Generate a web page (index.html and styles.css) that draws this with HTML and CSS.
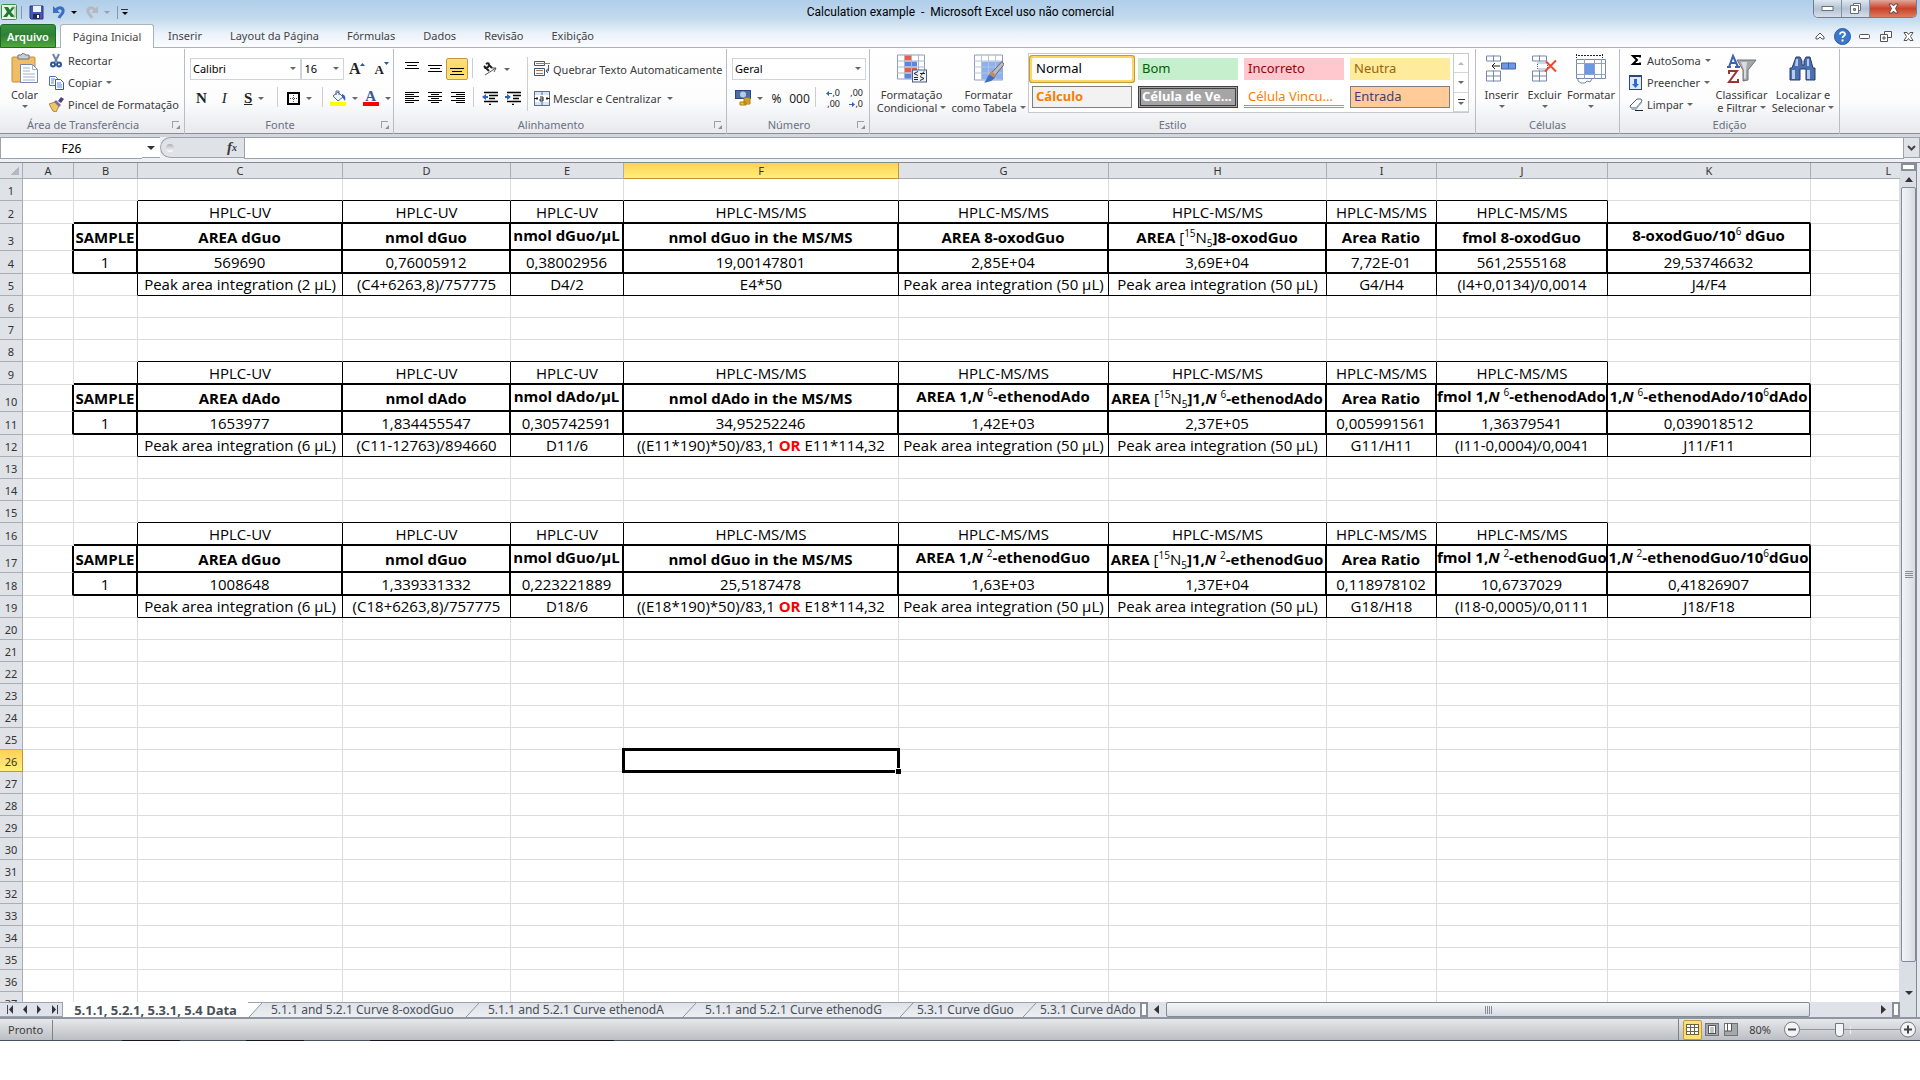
FILE: index.html
```html
<!DOCTYPE html>
<html lang="pt-BR">
  <head>
    <meta charset="UTF-8" />
    <title>Calculation example - Microsoft Excel uso não comercial</title>
    <link rel="stylesheet" href="styles.css">
  </head>
  <body>
    <div class="window">
      <header class="top">
        <div class="title-bar">
          <div class="quick-access">
            <svg width="17" height="17" viewBox="0 0 17 17"><rect x=".5" y=".5" width="15" height="15" rx="1" fill="#e9f4e4" stroke="#3f8f4a"/><path d="M3 3h4l2 3 2-3h3L10 8l4 5h-4l-2-3-2 3H2l4-5z" fill="#1d7a33"/><path d="M11 3h3v10h-2" fill="none" stroke="#8cc08c"/></svg>
            <i class="bar"></i>
            <button class="qa" title="Salvar"><svg width="15" height="15" viewBox="0 0 15 15"><path d="M1 1h13v13H2l-1-1z" fill="#4a55b8" stroke="#2c3484"/><path d="M4 1h8v6H4z" fill="#eef3fb"/><path d="M4 9h7v5H4z" fill="#23285c"/><path d="M8 10h2v3H8z" fill="#fff"/></svg></button>
            <button class="qa undo" title="Desfazer"><svg width="14" height="14" viewBox="0 0 14 14"><path d="M4 5c3-4 8-2 7 2-1 3-3 3-4 6" fill="none" stroke="#3d6fc0" stroke-width="3"/><path d="M1 1v7h7z" fill="#3d6fc0"/></svg><i class="arr dark"></i></button>
            <button class="qa undo" title="Refazer"><svg width="14" height="14" viewBox="0 0 14 14"><path d="M10 5C7 1 2 3 3 7c1 3 3 3 4 6" fill="none" stroke="#b4b9c0" stroke-width="3"/><path d="M13 1v7H6z" fill="#b4b9c0"/></svg><i class="arr pale"></i></button>
            <i class="bar"></i>
            <button class="qa more" title="Personalizar"><i class="dash"></i><i class="arr dark"></i></button>
          </div>
          <h1>Calculation example&nbsp; -&nbsp; Microsoft Excel uso não comercial</h1>
          <div class="window-side">
            <div class="window-buttons">
              <button title="Minimizar"><svg width="13" height="7" viewBox="0 0 13 7"><rect x="1" y="1.500" width="11" height="4" fill="#fff" stroke="#666f7a"/></svg></button>
              <button title="Restaurar"><svg width="13" height="13" viewBox="0 0 13 13"><path d="M4.500 1.500h7v7h-2v-5h-5z" fill="#fff" stroke="#666f7a"/><path d="M1.500 3.500h8v8h-8z" fill="#fff" stroke="#666f7a"/><path d="M4.500 6.500h2v2h-2z" fill="#bbb" stroke="#666f7a"/></svg></button>
              <button class="close" title="Fechar"><svg width="13" height="11" viewBox="0 0 13 11"><path d="M2 1h3l1.500 2L8 1h3L8.500 5.500 11 10H8L6.500 8 5 10H2l2.500-4.500z" fill="#fff" stroke="#6b4044"/></svg></button>
            </div>
          </div>
        </div>
        <nav class="tabs">
          <button class="file">Arquivo</button>
          <button class="active">Página Inicial</button>
          <button>Inserir</button>
          <button>Layout da Página</button>
          <button>Fórmulas</button>
          <button>Dados</button>
          <button>Revisão</button>
          <button>Exibição</button>
          <div class="tab-tools">
            <button title="Minimizar faixa"><svg width="10" height="8" viewBox="0 0 10 8"><path d="M1 5l4-4 4 4v2H7L5 5 3 7H1z" fill="#fff" stroke="#555"/></svg></button>
            <button title="Ajuda"><svg width="17" height="17" viewBox="0 0 17 17"><circle cx="8.500" cy="8.500" r="8" fill="#3b78cc" stroke="#2a5ca8"/><path d="M6 6.500c0-3.500 5.500-3 5 0-.3 1.500-2.500 1.500-2.500 3.500" fill="none" stroke="#fff" stroke-width="1.800"/><rect x="7.500" y="11.500" width="2" height="2" fill="#fff"/></svg></button>
            <button title="Minimizar"><svg width="11" height="5" viewBox="0 0 11 5"><rect x=".5" y=".5" width="10" height="4" rx="1" fill="#fff" stroke="#555"/></svg></button>
            <button title="Restaurar"><svg width="12" height="11" viewBox="0 0 12 11"><path d="M4.500.5h7v6h-7z" fill="#fff" stroke="#555"/><path d="M.5 3.500h7v7h-7z" fill="#fff" stroke="#555"/><path d="M3 6h2v2H3z" fill="#fff" stroke="#555"/></svg></button>
            <button title="Fechar"><svg width="11" height="9" viewBox="0 0 11 9"><path d="M1 .5h3l1.500 2 1.500-2h3L7.500 4.500 10 8.500H7l-1.500-2-1.500 2H1l2.500-4z" fill="#fff" stroke="#555"/></svg></button>
          </div>
        </nav>
      </header>

      <section class="ribbon">
        <div class="group clipboard">
          <div class="tools">
            <button class="big"><svg width="28" height="32" viewBox="0 0 28 32"><rect x="1" y="4" width="23" height="25" rx="1" fill="#efbd67" stroke="#c78e3a"/><path d="M7 2h3l2-2 3 2h3v4H7z" fill="#c9ced6" stroke="#70757d"/><path d="M9.500 11.500h12l5 5v13h-17z" fill="#fff" stroke="#6f87b5"/><path d="M21.500 11.500v5h5M12 15h7M12 18h7M12 21h12M12 24h12M12 27h12" fill="none" stroke="#9db0d1"/></svg><span>Colar</span><i class="arr"></i></button>
            <div class="list">
              <button><svg width="15" height="15" viewBox="0 0 15 15"><path d="M4 1l4 8M10 1L6 9" stroke="#6d83a8" stroke-width="2"/><circle cx="4" cy="11.500" r="2" fill="none" stroke="#2f5597" stroke-width="2"/><circle cx="10" cy="11.500" r="2" fill="none" stroke="#2f5597" stroke-width="2"/></svg>Recortar</button>
              <button><svg width="15" height="15" viewBox="0 0 15 15"><path d="M.5 1.500h6l2 2v7h-8z" fill="#fff" stroke="#4d74b5"/><path d="M6.500 4.500h5l3 3v7h-8z" fill="#fff" stroke="#2d5cae"/><path d="M2 4h4M2 6h3M2 8h3M8 8h4M8 10h5M8 12h5" stroke="#5d86cc"/></svg>Copiar<i class="arr"></i></button>
              <button><svg width="15" height="15" viewBox="0 0 15 15"><path d="M0 7l6-2 4 4-3 6-3-1z" fill="#eec665" stroke="#b08a3a"/><path d="M5 5l2-2 5 5-2 2z" fill="#7a6ea8"/><path d="M9 4l3-4 3 2-3 4z" fill="#4b4570"/></svg>Pincel de Formatação</button>
            </div>
          </div>
          <footer class="has-launch">Área de Transferência<i class="launch"></i></footer>
        </div>

        <div class="group font">
          <div class="tools rows">
            <div class="row">
              <span class="select w-font"><select aria-label="Fonte"><option>Calibri</option></select></span><span class="select w-size"><select aria-label="Tamanho"><option>16</option></select></span>
              <button class="ico serif a-big">A<svg width="5" height="3" viewBox="0 0 5 3"><path d="M0 3l2.500-3L5 3z" fill="#2f5597"/></svg></button>
              <button class="ico serif a-small">A<svg width="5" height="3" viewBox="0 0 5 3"><path d="M0 0h5L2.500 3z" fill="#2f5597"/></svg></button>
            </div>
            <div class="row">
              <button class="ico serif"><b>N</b></button>
              <button class="ico serif"><em>I</em></button>
              <button class="ico serif split"><u>S</u><i class="arr"></i></button>
              <i class="sep"></i>
              <button class="ico split"><svg width="13" height="13" viewBox="0 0 13 13"><rect x="1" y="1" width="11" height="11" fill="none" stroke="#000" stroke-width="2"/><path d="M6.500 3v8M3 6.500h8" stroke="#555" stroke-dasharray="1 1"/></svg><i class="arr"></i></button>
              <i class="sep"></i>
              <button class="ico split"><svg width="16" height="16" viewBox="0 0 16 16"><path d="M3 6l5-4 5 5-5 4z" fill="#eef3fa" stroke="#50698f"/><path d="M6 5V1h3v4" fill="none" stroke="#50698f"/><path d="M12 4c3 1 4 3 3 7l-3-4z" fill="#3d67ad"/><rect y="12" width="16" height="4" fill="#ff0"/></svg><i class="arr"></i></button>
              <button class="ico split"><span class="font-color">A</span><i class="arr"></i></button>
            </div>
          </div>
          <footer class="has-launch">Fonte<i class="launch"></i></footer>
        </div>

        <div class="group align">
          <div class="tools">
            <div class="rows">
              <div class="row">
                <button class="ico"><svg width="14" height="14" viewBox="0 0 14 14"><path d="M0 .5h14M2 3.500h10M0 6.500h14" stroke="#000"/></svg></button>
                <button class="ico"><svg width="14" height="14" viewBox="0 0 14 14"><path d="M0 3.500h14M2 6.500h10M0 9.500h14" stroke="#000"/></svg></button>
                <button class="ico on"><svg width="14" height="14" viewBox="0 0 14 14"><path d="M0 6.500h14M2 9.500h10M0 12.500h14" stroke="#000"/></svg></button>
                <i class="sep"></i>
                <button class="ico split"><svg width="16" height="14" viewBox="0 0 16 14"><path d="M3 13L14 6M14 6l-4 0M14 6l-2 4" stroke="#555" fill="none"/><path d="M2 4l5 5M4 2c3-2 4 1 2 3s-4 1-3-1M7 3l3 3" fill="none" stroke="#222" stroke-width="2"/></svg><i class="arr"></i></button>
              </div>
              <div class="row">
                <button class="ico"><svg width="14" height="12" viewBox="0 0 14 12"><path d="M0 .5h14M0 2.500h9M0 4.500h14M0 6.500h9M0 8.500h14M0 10.500h9" stroke="#000"/></svg></button>
                <button class="ico"><svg width="14" height="12" viewBox="0 0 14 12"><path d="M0 .5h14M3 2.500h8M0 4.500h14M3 6.500h8M0 8.500h14M3 10.500h8" stroke="#000"/></svg></button>
                <button class="ico"><svg width="14" height="12" viewBox="0 0 14 12"><path d="M0 .5h14M5 2.500h9M0 4.500h14M5 6.500h9M0 8.500h14M5 10.500h9" stroke="#000"/></svg></button>
                <i class="sep"></i>
                <button class="ico"><svg width="16" height="14" viewBox="0 0 16 14"><path d="M2 1.500h14M7 4.500h9M7 7.500h6M2 10.500h14M7 13.500h2" stroke="#000" stroke-width="1.500"/><path d="M0 6l4-3v2h2v2H4v2z" fill="#2d62c4"/></svg></button>
                <button class="ico"><svg width="16" height="14" viewBox="0 0 16 14"><path d="M2 1.500h14M8 4.500h8M8 7.500h6M2 10.500h14M7 13.500h2" stroke="#000" stroke-width="1.500"/><path d="M6 6L2 3v2H0v2h2v2z" fill="#2d62c4"/></svg></button>
              </div>
            </div>
            <i class="sep tall"></i>
            <div class="rows wide">
              <div class="row">
                <button class="text-btn"><svg width="16" height="16" viewBox="0 0 16 16"><path d="M.5.5h10v4H.5zM.5 7.500h10v7H.5z" fill="#fff" stroke="#44546f"/><path d="M2 2.500h14M2 9.500h7M2 12.500h7" stroke="#c0703a"/><path d="M14.500 4v6h-2M14 7.500l-2 2.500 2 2" fill="none" stroke="#3c5a92"/></svg>Quebrar Texto Automaticamente</button>
              </div>
              <div class="row">
                <button class="text-btn"><svg width="16" height="15" viewBox="0 0 16 15"><rect x=".5" y=".5" width="15" height="14" fill="#d9e4f4" stroke="#5a6f94"/><path d="M8 0v4M8 11v4" stroke="#5a6f94"/><rect x="1" y="4" width="14" height="7" fill="#fff"/><path d="M0 7.500h4M12 7.500h4M3 6v3M13 6v3" stroke="#222"/><path d="M6 6h3v4H6v-2h3" fill="none" stroke="#222"/></svg>Mesclar e Centralizar<i class="arr"></i></button>
              </div>
            </div>
          </div>
          <footer class="has-launch">Alinhamento<i class="launch"></i></footer>
        </div>

        <div class="group number">
          <div class="tools rows">
            <div class="row"><span class="select w-number"><select aria-label="Formato de número"><option>Geral</option></select></span></div>
            <div class="row">
              <button class="ico split"><svg width="16" height="16" viewBox="0 0 16 16"><rect x=".5" y=".5" width="15" height="8" fill="#4b6dad" stroke="#2c477c"/><circle cx="8" cy="4.500" r="3" fill="#b9c9e6"/><path d="M9 8h6v6H9zM5 12h6v3H5z" fill="#f3c33c" stroke="#b07d12"/><path d="M9 10h6M9 12h6" stroke="#b07d12"/></svg><i class="arr"></i></button>
              <button class="ico num">%</button>
              <button class="ico num">000</button>
              <i class="sep"></i>
              <button class="ico dec"><svg width="6" height="5" viewBox="0 0 6 5"><path d="M0 2.500L3 0v2h3v1H3v2z" fill="#2d62c4"/></svg>,0<br>,00</button>
              <button class="ico dec">,00<br><svg width="6" height="5" viewBox="0 0 6 5"><path d="M6 2.500L3 0v2H0v1h3v2z" fill="#2d62c4"/></svg>,0</button>
            </div>
          </div>
          <footer class="has-launch">Número<i class="launch"></i></footer>
        </div>

        <div class="group style">
          <div class="tools">
            <button class="big"><svg width="30" height="29" viewBox="0 0 30 29"><path d="M.5.500h27v24H.5z" fill="#fff" stroke="#8b9dbb"/><path d="M8 1h6v5H8zM8 13h12v5H8z" fill="#ee5a44"/><path d="M8 7h12v5H8zM8 19h6v5H8z" fill="#5b86e0"/><path d="M0 6.500h28M0 12.500h28M0 18.500h28M7.500 0v24M14.500 0v24M21.500 0v24" stroke="#a9b7cf"/><rect x="15.500" y="15.500" width="14" height="12" fill="#eef3fa" stroke="#4d5f80"/><path d="M21 17l-4 2 4 2M17 23h4M23 19h5M27 17l-3 4M23 22l4 2-4 2M17 25h4" fill="none" stroke="#222"/></svg><span>Formatação<br>Condicional<i class="arr"></i></span></button>
            <button class="big"><svg width="30" height="29" viewBox="0 0 30 29"><path d="M.5.500h28v25H.5z" fill="#fff" stroke="#8b9dbb"/><path d="M7 7h22v18H7z" fill="#8db0f0"/><path d="M0 6.500h28M0 12.500h28M0 18.500h28M7.500 0v25M14.500 0v25M21.500 0v25" stroke="#b5c3da"/><path d="M28 7l2 3-9 11-4-2z" fill="#b9bcc2" stroke="#666"/><path d="M17 18l5 3c-2 5-7 7-12 7 3-2 3-7 7-10z" fill="#3f6fc4"/><path d="M17 17l5 3-2 3-5-3z" fill="#c98d52"/></svg><span>Formatar<br>como Tabela<i class="arr"></i></span></button>
            <div class="gallery">
              <div class="styles">
                <button class="normal">Normal</button>
                <button class="good">Bom</button>
                <button class="bad">Incorreto</button>
                <button class="neutral">Neutra</button>
                <button class="calc">Cálculo</button>
                <button class="check">Célula de Ve...</button>
                <button class="linked">Célula Vincu...</button>
                <button class="input">Entrada</button>
              </div>
              <div class="gallery-scroll">
                <button disabled title="Acima"><i class="arr up"></i></button>
                <button title="Abaixo"><i class="arr"></i></button>
                <button title="Mais"><i class="dash"></i><i class="arr"></i></button>
              </div>
            </div>
          </div>
          <footer>Estilo</footer>
        </div>

        <div class="group cells">
          <div class="tools">
            <button class="big"><svg width="31" height="29" viewBox="0 0 31 29"><path d="M.5 1.500h14v5H.5zM.5 16.500h14v10H.5zM7.500 1v6M7.500 16v11M0 21.500h14" fill="#fff" stroke="#7488aa"/><path d="M15.500 8.500h14v6h-14z" fill="#6d98e6" stroke="#3f64a8"/><path d="M22.500 8v6" stroke="#3f64a8"/><path d="M6 11.500h8M9 8.500l-3 3 3 3" fill="none" stroke="#222"/></svg><span>Inserir</span><i class="arr"></i></button>
            <button class="big"><svg width="31" height="29" viewBox="0 0 31 29"><path d="M3.500 1.500h14v5h-14zM3.500 16.500h14v10h-14zM10.500 1v6M10.500 16v11M3 21.500h14" fill="#fff" stroke="#7488aa"/><path d="M8.500 8.500h10v6h-10z" fill="#fff" stroke="#3f64a8" stroke-dasharray="1 1"/><path d="M17 7l10 10M27 6L16 17" stroke="#ea4a2c" stroke-width="2"/></svg><span>Excluir</span><i class="arr"></i></button>
            <button class="big"><svg width="31" height="30" viewBox="0 0 31 30"><path d="M.5 5.500h29v19H.5z" fill="#fff" stroke="#7488aa"/><path d="M9 10h9v10H9z" fill="#6d98e6"/><path d="M0 9.500h30M0 20.500h30M8.500 5v20M18.500 5v20M25.500 5v20" stroke="#8fa2c4"/><path d="M.5 0v4M26.500 0v4M2 1.500h24" stroke="#222" stroke-dasharray="2 1"/><path d="M2 25v2l3 2h4l2-2 3 1 2-3" fill="#fff" stroke="#7488aa"/></svg><span>Formatar</span><i class="arr"></i></button>
          </div>
          <footer>Células</footer>
        </div>

        <div class="group edit">
          <div class="tools">
            <div class="list">
              <button><svg width="14" height="14" viewBox="0 0 14 14"><path d="M11 4.500V3H4l4 4-4 4h7V9.500" fill="none" stroke="#000" stroke-width="2"/></svg>AutoSoma<i class="arr"></i></button>
              <button><svg width="14" height="15" viewBox="0 0 14 15"><rect x=".5" y=".5" width="12" height="14" fill="#dfe9f8" stroke="#2c477c"/><path d="M0 1.500h13" stroke="#2c477c"/><path d="M5 4h3v5h2l-3.500 4L3 9h2z" fill="#2d6ad0"/></svg>Preencher<i class="arr"></i></button>
              <button><svg width="14" height="14" viewBox="0 0 14 14"><path d="M1 9l7-7h4l1 2-6 7H2z" fill="#fff" stroke="#50607c"/><path d="M2 11l6-1 5-6v2l-6 7H3z" fill="#9fb0cc"/><path d="M6 13.500h8" stroke="#222"/></svg>Limpar<i class="arr"></i></button>
            </div>
            <button class="big"><svg width="30" height="30" viewBox="0 0 30 30"><path d="M10 6h19l-8 10v10l-5 1V16z" fill="#a4a7ab" stroke="#6e7175"/><path d="M14 8h6l-1 8v8l-2 1v-9z" fill="#dcdddf"/><path d="M2 13L6 2l5 11M3 9h6M0 13h4M8 13h5" fill="none" stroke="#3a62b5" stroke-width="2"/><path d="M2 20v-3h8L2 28h9v-3" fill="none" stroke="#9c3434" stroke-width="2"/></svg><span>Classificar<br>e Filtrar<i class="arr"></i></span></button>
            <button class="big"><svg width="30" height="30" viewBox="0 0 30 30"><path d="M8 3h4l2 4v4h2V7l2-4h4l3 11h2v12h-9V15h-6v11H2V14h2z" fill="#4c6fb0" stroke="#243c6e"/><path d="M4 16h3v9H4zM19 16h3v9h-3zM8 5h2v7H7zM19 5h2v7h-2z" fill="#b7cbee"/></svg><span>Localizar e<br>Selecionar<i class="arr"></i></span></button>
          </div>
          <footer>Edição</footer>
        </div>
      </section>

      <section class="formula-bar">
        <input class="name-box" aria-label="Caixa de nome" value="F26">
        <button class="name-drop" title="Nomes"><i class="arr wide"></i></button>
        <div class="fx"><i class="knob"></i><button title="Inserir função"><em>f</em>x</button></div>
        <input class="formula" aria-label="Barra de fórmulas">
        <button class="expand" title="Expandir"><svg width="9" height="6" viewBox="0 0 9 6"><path d="M1 1l3.500 3.500L8 1" fill="none" stroke="#444" stroke-width="2"/></svg></button>
      </section>

      <main class="sheet">
        <div class="grid">
          <table>
            <colgroup>
              <col class="c-num"><col class="c-a"><col class="c-b"><col class="c-c"><col class="c-d"><col class="c-e"><col class="c-f"><col class="c-g"><col class="c-h"><col class="c-i"><col class="c-j"><col class="c-k"><col>
            </colgroup>
            <thead>
              <tr><th class="corner"></th><th>A</th><th>B</th><th>C</th><th>D</th><th>E</th><th class="current">F</th><th>G</th><th>H</th><th>I</th><th>J</th><th>K</th><th class="last">L</th></tr>
            </thead>
            <tbody>
              <tr class="before"><th>1</th><td></td><td></td><td></td><td></td><td></td><td></td><td></td><td></td><td></td><td></td><td></td><td></td></tr>
              <tr class="method"><th>2</th><td></td><td></td><td>HPLC-UV</td><td>HPLC-UV</td><td>HPLC-UV</td><td>HPLC-MS/MS</td><td>HPLC-MS/MS</td><td>HPLC-MS/MS</td><td>HPLC-MS/MS</td><td>HPLC-MS/MS</td><td></td><td></td></tr>
              <tr class="names"><th>3</th><td></td><td>SAMPLE</td><td>AREA dGuo</td><td>nmol dGuo</td><td class="raised">nmol dGuo/µL</td><td>nmol dGuo in the MS/MS</td><td>AREA 8-oxodGuo</td><td>AREA <span>[<sup>15</sup>N<sub>5</sub></span>]8-oxodGuo</td><td>Area Ratio</td><td>fmol 8-oxodGuo</td><td class="raised">8-oxodGuo/10<sup>6</sup> dGuo</td><td></td></tr>
              <tr class="values"><th>4</th><td></td><td>1</td><td>569690</td><td>0,76005912</td><td>0,38002956</td><td>19,00147801</td><td>2,85E+04</td><td>3,69E+04</td><td>7,72E-01</td><td>561,2555168</td><td>29,53746632</td><td></td></tr>
              <tr class="formulas"><th>5</th><td></td><td></td><td>Peak area integration (2 µL)</td><td>(C4+6263,8)/757775</td><td>D4/2</td><td>E4*50</td><td>Peak area integration (50 µL)</td><td>Peak area integration (50 µL)</td><td>G4/H4</td><td>(I4+0,0134)/0,0014</td><td>J4/F4</td><td></td></tr>
              <tr><th>6</th><td></td><td></td><td></td><td></td><td></td><td></td><td></td><td></td><td></td><td></td><td></td><td></td></tr>
              <tr><th>7</th><td></td><td></td><td></td><td></td><td></td><td></td><td></td><td></td><td></td><td></td><td></td><td></td></tr>
              <tr class="before"><th>8</th><td></td><td></td><td></td><td></td><td></td><td></td><td></td><td></td><td></td><td></td><td></td><td></td></tr>
              <tr class="method"><th>9</th><td></td><td></td><td>HPLC-UV</td><td>HPLC-UV</td><td>HPLC-UV</td><td>HPLC-MS/MS</td><td>HPLC-MS/MS</td><td>HPLC-MS/MS</td><td>HPLC-MS/MS</td><td>HPLC-MS/MS</td><td></td><td></td></tr>
              <tr class="names"><th>10</th><td></td><td>SAMPLE</td><td>AREA dAdo</td><td>nmol dAdo</td><td class="raised">nmol dAdo/µL</td><td>nmol dAdo in the MS/MS</td><td class="raised">AREA 1,<em>N</em> <sup>6</sup>-ethenodAdo</td><td>AREA <span>[<sup>15</sup>N<sub>5</sub></span>]1,<em>N</em> <sup>6</sup>-ethenodAdo</td><td>Area Ratio</td><td class="raised">fmol 1,<em>N</em> <sup>6</sup>-ethenodAdo</td><td class="raised">1,<em>N</em> <sup>6</sup>-ethenodAdo/10<sup>6</sup>dAdo</td><td></td></tr>
              <tr class="values"><th>11</th><td></td><td>1</td><td>1653977</td><td>1,834455547</td><td>0,305742591</td><td>34,95252246</td><td>1,42E+03</td><td>2,37E+05</td><td>0,005991561</td><td>1,36379541</td><td>0,039018512</td><td></td></tr>
              <tr class="formulas"><th>12</th><td></td><td></td><td>Peak area integration (6 µL)</td><td>(C11-12763)/894660</td><td>D11/6</td><td>((E11*190)*50)/83,1 <strong>OR</strong> E11*114,32</td><td>Peak area integration (50 µL)</td><td>Peak area integration (50 µL)</td><td>G11/H11</td><td>(I11-0,0004)/0,0041</td><td>J11/F11</td><td></td></tr>
              <tr><th>13</th><td></td><td></td><td></td><td></td><td></td><td></td><td></td><td></td><td></td><td></td><td></td><td></td></tr>
              <tr><th>14</th><td></td><td></td><td></td><td></td><td></td><td></td><td></td><td></td><td></td><td></td><td></td><td></td></tr>
              <tr class="before"><th>15</th><td></td><td></td><td></td><td></td><td></td><td></td><td></td><td></td><td></td><td></td><td></td><td></td></tr>
              <tr class="method"><th>16</th><td></td><td></td><td>HPLC-UV</td><td>HPLC-UV</td><td>HPLC-UV</td><td>HPLC-MS/MS</td><td>HPLC-MS/MS</td><td>HPLC-MS/MS</td><td>HPLC-MS/MS</td><td>HPLC-MS/MS</td><td></td><td></td></tr>
              <tr class="names"><th>17</th><td></td><td>SAMPLE</td><td>AREA dGuo</td><td>nmol dGuo</td><td class="raised">nmol dGuo/µL</td><td>nmol dGuo in the MS/MS</td><td class="raised">AREA 1,<em>N</em> <sup>2</sup>-ethenodGuo</td><td>AREA <span>[<sup>15</sup>N<sub>5</sub></span>]1,<em>N</em> <sup>2</sup>-ethenodGuo</td><td>Area Ratio</td><td class="raised">fmol 1,<em>N</em> <sup>2</sup>-ethenodGuo</td><td class="raised">1,<em>N</em> <sup>2</sup>-ethenodGuo/10<sup>6</sup>dGuo</td><td></td></tr>
              <tr class="values"><th>18</th><td></td><td>1</td><td>1008648</td><td>1,339331332</td><td>0,223221889</td><td>25,5187478</td><td>1,63E+03</td><td>1,37E+04</td><td>0,118978102</td><td>10,6737029</td><td>0,41826907</td><td></td></tr>
              <tr class="formulas"><th>19</th><td></td><td></td><td>Peak area integration (6 µL)</td><td>(C18+6263,8)/757775</td><td>D18/6</td><td>((E18*190)*50)/83,1 <strong>OR</strong> E18*114,32</td><td>Peak area integration (50 µL)</td><td>Peak area integration (50 µL)</td><td>G18/H18</td><td>(I18-0,0005)/0,0111</td><td>J18/F18</td><td></td></tr>
              <tr><th>20</th><td></td><td></td><td></td><td></td><td></td><td></td><td></td><td></td><td></td><td></td><td></td><td></td></tr>
              <tr><th>21</th><td></td><td></td><td></td><td></td><td></td><td></td><td></td><td></td><td></td><td></td><td></td><td></td></tr>
              <tr><th>22</th><td></td><td></td><td></td><td></td><td></td><td></td><td></td><td></td><td></td><td></td><td></td><td></td></tr>
              <tr><th>23</th><td></td><td></td><td></td><td></td><td></td><td></td><td></td><td></td><td></td><td></td><td></td><td></td></tr>
              <tr><th>24</th><td></td><td></td><td></td><td></td><td></td><td></td><td></td><td></td><td></td><td></td><td></td><td></td></tr>
              <tr><th>25</th><td></td><td></td><td></td><td></td><td></td><td></td><td></td><td></td><td></td><td></td><td></td><td></td></tr>
              <tr><th class="current">26</th><td></td><td></td><td></td><td></td><td></td><td class="selected"></td><td></td><td></td><td></td><td></td><td></td><td></td></tr>
              <tr><th>27</th><td></td><td></td><td></td><td></td><td></td><td></td><td></td><td></td><td></td><td></td><td></td><td></td></tr>
              <tr><th>28</th><td></td><td></td><td></td><td></td><td></td><td></td><td></td><td></td><td></td><td></td><td></td><td></td></tr>
              <tr><th>29</th><td></td><td></td><td></td><td></td><td></td><td></td><td></td><td></td><td></td><td></td><td></td><td></td></tr>
              <tr><th>30</th><td></td><td></td><td></td><td></td><td></td><td></td><td></td><td></td><td></td><td></td><td></td><td></td></tr>
              <tr><th>31</th><td></td><td></td><td></td><td></td><td></td><td></td><td></td><td></td><td></td><td></td><td></td><td></td></tr>
              <tr><th>32</th><td></td><td></td><td></td><td></td><td></td><td></td><td></td><td></td><td></td><td></td><td></td><td></td></tr>
              <tr><th>33</th><td></td><td></td><td></td><td></td><td></td><td></td><td></td><td></td><td></td><td></td><td></td><td></td></tr>
              <tr><th>34</th><td></td><td></td><td></td><td></td><td></td><td></td><td></td><td></td><td></td><td></td><td></td><td></td></tr>
              <tr><th>35</th><td></td><td></td><td></td><td></td><td></td><td></td><td></td><td></td><td></td><td></td><td></td><td></td></tr>
              <tr><th>36</th><td></td><td></td><td></td><td></td><td></td><td></td><td></td><td></td><td></td><td></td><td></td><td></td></tr>
              <tr><th>37</th><td></td><td></td><td></td><td></td><td></td><td></td><td></td><td></td><td></td><td></td><td></td><td></td></tr>
            </tbody>
          </table>
        </div>
        <div class="v-scroll">
          <i class="split-box"></i>
          <button title="Acima"><i class="arr wide up"></i></button>
          <div class="v-thumb"><i></i></div>
          <button class="down" title="Abaixo"><i class="arr wide"></i></button>
        </div>
      </main>

      <section class="sheet-bar">
        <div class="sheet-nav">
          <button title="Primeira"><svg width="7" height="9" viewBox="0 0 7 9"><path d="M.5 0v9" stroke="#445"/><path d="M6 0v9L2 4.500z" fill="#334"/></svg></button>
          <button title="Anterior"><svg width="7" height="9" viewBox="0 0 7 9"><path d="M5 0v9L1 4.500z" fill="#334"/></svg></button>
          <button title="Próxima"><svg width="7" height="9" viewBox="0 0 7 9"><path d="M1 0v9l4-4.500z" fill="#334"/></svg></button>
          <button title="Última"><svg width="7" height="9" viewBox="0 0 7 9"><path d="M6.500 0v9" stroke="#445"/><path d="M1 0v9l4-4.500z" fill="#334"/></svg></button>
        </div>
        <div class="sheet-tabs">
          <button class="active">5.1.1, 5.2.1, 5.3.1, 5.4 Data</button>
          <button class="inactive"><svg width="15" height="15" viewBox="0 0 15 15"><path d="M0 0h15L3 12l-3 3z" fill="#fff"/><path d="M0 15l3-3L14 0" fill="none" stroke="#8d949e"/></svg>5.1.1 and 5.2.1 Curve 8-oxodGuo</button>
          <button class="inactive"><svg width="15" height="15" viewBox="0 0 15 15"><path d="M0 15l3-3L14 0" fill="none" stroke="#8d949e"/></svg>5.1.1 and 5.2.1 Curve ethenodA</button>
          <button class="inactive"><svg width="15" height="15" viewBox="0 0 15 15"><path d="M0 15l3-3L14 0" fill="none" stroke="#8d949e"/></svg>5.1.1 and 5.2.1 Curve ethenodG</button>
          <button class="inactive short"><svg width="15" height="15" viewBox="0 0 15 15"><path d="M0 15l3-3L14 0" fill="none" stroke="#8d949e"/></svg>5.3.1 Curve dGuo</button>
          <button class="inactive short"><svg width="15" height="15" viewBox="0 0 15 15"><path d="M0 15l3-3L14 0" fill="none" stroke="#8d949e"/></svg>5.3.1 Curve dAdo</button>
        </div>
        <i class="splitter"></i>
        <div class="h-scroll">
          <button title="Esquerda"><svg width="6" height="9" viewBox="0 0 6 9"><path d="M5 0v9L0 4.500z" fill="#333"/></svg></button>
          <div class="h-thumb"><i></i></div>
          <button title="Direita"><svg width="6" height="9" viewBox="0 0 6 9"><path d="M1 0v9l5-4.500z" fill="#333"/></svg></button>
        </div>
        <i class="splitter"></i>
        <i class="size-corner"></i>
      </section>

      <footer class="status">
        <span class="ready">Pronto</span>
        <div class="views">
          <button class="on" title="Normal"><svg width="13" height="11" viewBox="0 0 13 11"><rect x=".5" y=".5" width="12" height="10" fill="#fff" stroke="#6b6447"/><path d="M0 3.500h13M0 7.500h13M4.500 0v11M8.500 0v11" stroke="#6b6447"/></svg></button>
          <button title="Layout da Página"><svg width="14" height="13" viewBox="0 0 14 13"><rect x=".5" y=".5" width="13" height="12" fill="#a3a7ae" stroke="#6f747b"/><rect x="3.500" y="2.500" width="7" height="8" fill="#fff" stroke="#555"/><path d="M5 5h4M5 7h4M5 9h4" stroke="#888"/></svg></button>
          <button title="Quebra de Página"><svg width="14" height="13" viewBox="0 0 14 13"><rect x=".5" y=".5" width="13" height="12" fill="#a3a7ae" stroke="#6f747b"/><path d="M1 1h7v7H1z" fill="#fff"/><path d="M3.500 0v8M7.500 0v8H1" fill="none" stroke="#555"/></svg></button>
        </div>
        <button class="percent">80%</button>
        <button class="round" title="Menos zoom"><svg width="16" height="17" viewBox="0 0 16 17"><circle cx="8" cy="8.500" r="7.500" fill="#f2f3f5" stroke="#737880"/><path d="M4 8.500h8" stroke="#444" stroke-width="2"/></svg></button>
        <input type="range" aria-label="Zoom" min="10" max="190" value="80">
        <button class="round" title="Mais zoom"><svg width="16" height="17" viewBox="0 0 16 17"><circle cx="8" cy="8.500" r="7.500" fill="#f2f3f5" stroke="#737880"/><path d="M4 8.500h8M8 4.500v8" stroke="#444" stroke-width="2"/></svg></button>
      </footer>
    </div>
  </body>
</html>
```

FILE: styles.css
```css
* {
  box-sizing: border-box;
}
body {
  margin: 0;
  background: #fff;
  font-family: "Noto Sans", "Open Sans", sans-serif;
  font-size: 11px;
  color: #3b3b3b;
}
button,
input,
select {
  font: inherit;
  color: inherit;
  border: 0;
  border-radius: 0;
  background: none;
  padding: 0;
  margin: 0;
  outline: none;
}
button {
  display: flex;
  align-items: center;
  justify-content: center;
  white-space: nowrap;
}
svg {
  display: block;
  flex: none;
}
.window {
  display: flex;
  flex-direction: column;
  height: calc(100vh - 39px);
  overflow: hidden;
}

/* little triangles and lines */
.arr {
  display: inline-block;
  flex: none;
  border: 3px solid transparent;
  border-top-color: #666;
  border-bottom: 0;
}
.arr.dark {
  border-top-color: #000;
}
.arr.pale {
  border-top-color: #9aa0a8;
}
.arr.wide {
  border-width: 4px;
  border-bottom: 0;
  border-top-color: #333;
}
.arr.up {
  border-top: 0;
  border-bottom: 3px solid #b5b9be;
}
.arr.wide.up {
  border-bottom: 5px solid #333;
}
.dash {
  width: 7px;
  height: 1px;
  background: #333;
}

/* title */
.top {
  background: linear-gradient(#b0cee9, #c3daee 40%, #e9f1f9 70%, #fdfdfe);
  border-bottom: 1px solid #adb2b9;
  height: 48px;
}
.title-bar {
  display: flex;
  height: 24px;
}
.quick-access,
.window-side {
  display: flex;
  flex: 1;
}
.quick-access {
  align-items: center;
  padding-left: 1px;
}
.window-side {
  justify-content: flex-end;
  align-items: flex-start;
}
.bar {
  width: 1px;
  height: 13px;
  background: #8694a5;
  margin: 0 3px;
}
.qa {
  margin-left: 4px;
}
.undo {
  gap: 5px;
  margin: 0 0 0 8px;
}
.quick-access .undo + .bar {
  margin-left: 7px;
}
.more {
  flex-direction: column;
  gap: 2px;
  margin: 0;
}
h1 {
  margin: 0;
  font-family: Roboto, "Open Sans", sans-serif;
  font-size: 12px;
  font-weight: 400;
  line-height: 24px;
  color: #000;
}
.window-buttons {
  display: flex;
  height: 18px;
  margin-right: 3px;
  border: 1px solid #6f7d8f;
  border-top: 0;
  border-radius: 0 0 5px 5px;
  overflow: hidden;
}
.window-buttons button {
  width: 28px;
  background: linear-gradient(#dfe8f2, #b4c2d2 50%, #d5dfea);
  border-right: 1px solid #8190a2;
}
.window-buttons .close {
  width: 46px;
  border-right: 0;
  background: linear-gradient(#e2a79b, #c8432a 50%, #e07a5c);
}

/* ribbon tabs */
.tabs {
  display: flex;
  height: 24px;
}
.tabs > button {
  padding: 0 14px 1px;
  color: #444;
}
.tabs .file {
  width: 56px;
  padding: 0;
  margin-right: 4px;
  color: #fff;
  font-weight: 600;
  background: linear-gradient(#3d9141, #2c8031 45%, #50a83d);
  border: 1px solid #1f6a2b;
  border-radius: 3px 3px 0 0;
}
.tabs .active {
  width: 94px;
  background: #fff;
  border: 1px solid #adb2b9;
  border-bottom: 0;
  border-radius: 3px 3px 0 0;
  padding: 0 12px;
}
.tab-tools {
  display: flex;
  margin-left: auto;
  padding-right: 1px;
}
.tab-tools button {
  width: 22px;
}

/* ribbon */
.ribbon {
  display: flex;
  height: 89px;
  padding-top: 1px;
  background: linear-gradient(#fff, #fdfdfe 60%, #e9ebee 95%);
  border-bottom: 3px solid #d3d7dd;
  box-shadow: inset 0 -1px #8b9097;
  flex: none;
}
.group {
  display: flex;
  flex-direction: column;
  border-right: 1px solid #b9bec6;
  height: 85px;
}
.tools {
  display: flex;
  flex: 1;
}
.group footer {
  position: relative;
  height: 18px;
  line-height: 18px;
  text-align: center;
  color: #697184;
}
.group .has-launch {
  padding-right: 18px;
}
.launch {
  position: absolute;
  right: 5px;
  top: 5px;
  width: 7px;
  height: 7px;
  border: 1px solid #9a9fa8;
  border-right: 0;
  border-bottom: 0;
}
.launch::after {
  content: "";
  position: absolute;
  left: 3px;
  top: 3px;
  border: 2px solid #8b9098;
  border-top-color: transparent;
  border-left-color: transparent;
}
.clipboard {
  width: 185px;
}
.font {
  width: 209px;
}
.align {
  width: 333px;
}
.number {
  width: 143px;
}
.style {
  width: 606px;
}
.cells {
  width: 144px;
}
.edit {
  width: 220px;
}
.big {
  flex-direction: column;
  justify-content: flex-start;
  padding-top: 4px;
  line-height: 13px;
}
.big svg {
  height: 32px;
  margin-bottom: 3px;
}
.big > .arr {
  margin-top: 4px;
}
.big span .arr {
  margin: 0 0 3px 3px;
}
.clipboard .big {
  width: 49px;
}
.list {
  display: flex;
  flex-direction: column;
}
.list button {
  height: 22px;
  gap: 4px;
  justify-content: flex-start;
}
.rows {
  display: flex;
  flex-direction: column;
  gap: 7px;
  padding-top: 9px;
}
.row {
  display: flex;
  height: 22px;
}
.select {
  position: relative;
  height: 22px;
  border: 1px solid #d0d3d9;
  background: #fff;
  color: #000;
}
.select::after {
  content: "";
  position: absolute;
  right: 4px;
  top: 8px;
  border: 3px solid transparent;
  border-top-color: #666;
  border-bottom: 0;
}
.select select {
  appearance: none;
  width: 100%;
  height: 20px;
  padding: 0 0 1px 2px;
}
.w-font {
  width: 112px;
}
.w-size {
  width: 43px;
}
.w-number {
  width: 134px;
}
.font .tools {
  padding-left: 5px;
}
.ico {
  width: 23px;
  color: #222;
}
.split {
  width: 37px;
  gap: 6px;
}
.font .split:nth-last-child(-n + 2) {
  width: 33px;
}
.on {
  background: linear-gradient(#fbe08a, #ffd75c 50%, #ffe575);
  border: 1px solid #c29a3f;
  border-radius: 2px;
}
.serif {
  font-family: "Liberation Serif", serif;
  font-size: 15px;
}
.serif b {
  font-weight: 900;
}
.serif u {
  font-weight: 700;
}
.a-big {
  font-size: 16px;
  font-weight: 700;
  align-items: flex-start;
  width: 26px;
  padding-top: 2px;
}
.a-small {
  font-size: 13px;
  font-weight: 700;
  align-items: flex-start;
  padding-top: 4px;
}
.a-big svg {
  margin-top: 3px;
}
.sep {
  width: 1px;
  height: 20px;
  margin: 0 4px;
  background: #c9cdd4;
}
.sep.tall {
  height: 54px;
  margin: 8px 3px 0 0;
}
.font-color {
  width: 16px;
  height: 16px;
  font: bold 15px/12px "Liberation Serif", serif;
  color: #3b5998;
  border-bottom: 4px solid #f00;
}
.align .tools {
  padding-left: 6px;
}
.align .rows .row > .on {
  width: 22px;
}
.align .rows {
  width: 127px;
}
.align .rows.wide {
  width: auto;
}
.text-btn {
  gap: 3px;
  margin-left: 3px;
}
.text-btn .arr {
  margin-left: 3px;
}
.number .tools {
  padding-left: 5px;
}
.num {
  font-size: 12px;
}
.number .split {
  width: 33px;
}
.dec {
  display: block;
  font-size: 9px;
  line-height: 11px;
  text-align: right;
  padding-right: 3px;
}
.dec svg {
  display: inline-block;
}
.style .big {
  width: 77px;
  margin-left: 2px;
}
.style .big + .big {
  width: 75px;
  margin: 0 2px 0 0;
}
.style .big:first-child {
  width: 79px;
}
.gallery {
  display: flex;
  height: 60px;
  margin: 4px 0 0 0;
  border: 1px solid #c6cad0;
  background: #fff;
}
.styles {
  display: grid;
  grid-template-columns: repeat(4, 100px);
  grid-auto-rows: 22px;
  gap: 6px;
  padding: 4px 3px;
}
.styles button {
  justify-content: flex-start;
  padding: 0 0 2px 4px;
  font-size: 13px;
  line-height: 16px;
}
.normal {
  color: #000;
  border-radius: 1px;
  box-shadow: 0 0 0 2px #ffd75c, 0 0 0 3px #c29a3f;
}
.good {
  background: #c6efce;
  color: #006100;
}
.bad {
  background: #ffc7ce;
  color: #9c0006;
}
.neutral {
  background: #ffeb9c;
  color: #9c6500;
}
.styles .calc {
  background: #f2f2f2;
  color: #fa7d00;
  border: 1px solid #7f7f7f;
  font-weight: 700;
  padding-left: 3px;
}
.styles .check {
  background: #a5a5a5;
  color: #fff;
  border: 3px double #3f3f3f;
  font-weight: 700;
  padding-left: 1px;
}
.styles .linked {
  color: #fa7d00;
  border-bottom: 3px double #ff8001;
  padding-bottom: 0;
}
.styles .input {
  background: #ffcc99;
  color: #3f3f76;
  border: 1px solid #7f7f7f;
  padding-left: 3px;
}
.gallery-scroll {
  display: grid;
  grid-template-rows: repeat(3, 1fr);
  width: 15px;
  border-left: 1px solid #c6cad0;
}
.gallery-scroll button {
  flex-direction: column;
  gap: 2px;
  border-bottom: 1px solid #d3d6db;
}
.cells .tools {
  padding-left: 4px;
}
.cells .big {
  width: 43px;
}
.cells .big:last-child {
  width: 50px;
}
.edit .list {
  padding-left: 9px;
  width: 89px;
}
.edit .big {
  width: 65px;
}
.edit .big:last-child {
  width: 58px;
}

/* formula bar */
.formula-bar {
  display: flex;
  flex: none;
  height: 26px;
  background: #eef0f6;
  border-bottom: 1px solid #868b94;
  padding-bottom: 4px;
}
.formula-bar input {
  background: #fff;
  height: 22px;
  border: 1px solid #9ea3ab;
  color: #000;
}
.formula-bar .name-box {
  width: 142px;
  border-right: 0;
  text-align: center;
  font-size: 12px;
}
.name-drop {
  width: 18px;
  background: #fff;
  border-top: 1px solid #9ea3ab;
  border-bottom: 1px solid #9ea3ab;
}
.fx {
  display: flex;
  align-items: center;
  justify-content: space-between;
  width: 84px;
  padding: 0 7px 0 5px;
  background: #dfe2e7;
  border: 1px solid #9ea3ab;
  border-right: 0;
  border-radius: 11px 0 0 11px;
}
.knob {
  width: 8px;
  height: 8px;
  border-radius: 50%;
  background: linear-gradient(#aeb2b8, #fff);
}
.fx button {
  font: italic bold 10px "Liberation Serif", serif;
}
.fx em {
  font-size: 15px;
}
.formula {
  flex: 1;
  padding: 0 4px;
}
.expand {
  width: 16px;
  background: #dfe2e7;
  border: 1px solid #9ea3ab;
  border-left: 0;
}

/* grid */
.sheet {
  display: flex;
  flex: 1;
  min-height: 0;
}
.grid {
  flex: 1;
  overflow: hidden;
}
table {
  width: 100%;
  table-layout: fixed;
  border-collapse: separate;
  border-spacing: 0;
}
.c-num { width: 23px; }
.c-a { width: 51px; }
.c-b { width: 64px; }
.c-c { width: 205px; }
.c-d { width: 168px; }
.c-e { width: 113px; }
.c-f { width: 275px; }
.c-g { width: 210px; }
.c-h { width: 218px; }
.c-i { width: 110px; }
.c-j { width: 171px; }
.c-k { width: 203px; }
th {
  padding: 0;
  font-size: 11px;
  font-weight: 400;
  color: #333;
  background: #dfe2e7;
  border-right: 1px solid #a9aeb6;
  border-bottom: 1px solid #a9aeb6;
}
thead th {
  height: 16px;
  line-height: 15px;
}
tbody th {
  line-height: 18px;
  vertical-align: bottom;
}
thead .last {
  padding-left: 66px;
  border-right: 0;
}
thead .corner {
  background: linear-gradient(135deg, transparent 50%, #b4b9c1 50%) 11px 4px / 8px 8px no-repeat #dfe2e7;
}
thead .current,
tbody .current {
  background: linear-gradient(#ffd058, #fff07a);
  border-color: #c5933a;
}
tr {
  height: 22px;
}
thead tr {
  height: 16px;
}
td {
  padding: 0;
  font-family: "Open Sans", "Noto Sans", sans-serif;
  font-size: 15px;
  line-height: 20px;
  color: #000;
  text-align: center;
  vertical-align: bottom;
  white-space: nowrap;
  border-right: 1px solid #dadcdd;
  border-bottom: 1px solid #dadcdd;
}
/* boxed samples: C-J on the method row, B-K below it */
.method,
.values {
  height: 23px;
}
.names {
  height: 27px;
}
.before td:nth-child(n + 4):nth-child(-n + 11),
.formulas td:nth-child(n + 4):nth-child(-n + 12) {
  border-bottom-color: #000;
}
.method td:nth-child(n + 3):nth-child(-n + 11),
.formulas td:nth-child(n + 3):nth-child(-n + 12) {
  border-right-color: #000;
}
.method td:nth-child(n + 3):nth-child(-n + 12),
.names td:nth-child(n + 3):nth-child(-n + 12),
.values td:nth-child(n + 3):nth-child(-n + 12) {
  border-bottom: 2px solid #000;
}
.names td:nth-child(n + 2):nth-child(-n + 12),
.values td:nth-child(n + 2):nth-child(-n + 12) {
  border-right: 2px solid #000;
}
.formulas td {
  line-height: 19px;
  padding-bottom: 1px;
}
.names td {
  font-weight: 700;
  padding-bottom: 2px;
}
.names .raised {
  padding-bottom: 4px;
}
.names span,
.names sup {
  font-weight: 400;
}
sup,
sub {
  font-size: 10px;
  line-height: 0;
}
td strong {
  color: #f00;
}
.selected {
  position: relative;
}
.selected::before {
  content: "";
  position: absolute;
  inset: -2px;
  border: 3px solid #000;
}
.selected::after {
  content: "";
  position: absolute;
  right: -3px;
  bottom: -3px;
  width: 5px;
  height: 5px;
  background: #000;
  box-shadow: -1px -1px #fff;
}

/* scroll bars */
.v-scroll {
  display: flex;
  flex-direction: column;
  align-items: center;
  width: 20px;
  padding: 0 4px 0 1px;
  background: linear-gradient(90deg, #dadee5 16px, #848b97 16px, #848b97 17px, #e4e7ec 17px);
}
.split-box {
  width: 15px;
  height: 8px;
  background: #fff;
  border: 2px solid #8a9099;
}
.v-scroll button {
  width: 15px;
  height: 16px;
}
.v-scroll .down {
  height: 18px;
}
.v-thumb {
  display: flex;
  align-items: center;
  justify-content: center;
  width: 15px;
  flex: 1;
  margin-bottom: 22px;
  border: 1px solid #848b97;
  border-radius: 2px;
  background: linear-gradient(90deg, #f3f5f8, #d7dbe1);
}
.v-thumb i {
  width: 8px;
  height: 7px;
  background: repeating-linear-gradient(#888e98 0 1px, transparent 1px 2px);
}
.sheet-bar {
  display: flex;
  flex: none;
  height: 17px;
  background: #dfe2e8;
  border-bottom: 2px solid #8f96a1;
}
.sheet-nav {
  display: flex;
  justify-content: space-around;
  width: 63px;
  padding-left: 3px;
  border: 1px solid #9ca3ad;
  border-left: 0;
}
.sheet-tabs {
  display: flex;
  width: 1077px;
  background: linear-gradient(#dde1e6, #eceff2);
}
.sheet-tabs button {
  flex: none;
  font-size: 12px;
  line-height: 14px;
  color: #4a4f57;
}
.sheet-tabs .active {
  width: 185px;
  background: #fff;
  font-size: 13px;
  font-weight: 700;
}
.sheet-tabs .inactive {
  justify-content: flex-start;
  gap: 8px;
  width: 217px;
  border-top: 1px solid #9ca3ad;
}
.sheet-tabs .short {
  gap: 3px;
  width: 123px;
}
.sheet-tabs .short:last-child {
  width: 118px;
}
.splitter {
  width: 8px;
  border: 2px solid #8a9099;
  background: #fff;
}
.h-scroll {
  display: flex;
  flex: 1;
}
.h-scroll button {
  width: 18px;
}
.h-scroll button:last-child {
  margin-left: 64px;
}
.h-thumb {
  display: flex;
  align-items: center;
  justify-content: center;
  flex: 1;
  border: 1px solid #848b97;
  border-radius: 2px;
  background: linear-gradient(#f3f5f8, #d7dbe1);
}
.h-thumb i {
  width: 7px;
  height: 8px;
  background: repeating-linear-gradient(90deg, #888e98 0 1px, transparent 1px 2px);
}
.size-corner {
  width: 20px;
  background: linear-gradient(90deg, #dadee5 16px, #848b97 16px, #848b97 17px, #e4e7ec 17px);
}

/* status bar */
.status {
  display: flex;
  align-items: center;
  flex: none;
  height: 22px;
  /* dark dashes of the taskbar show along the bottom edge */
  background:
    linear-gradient(#14181d, #14181d) 122px 100% / 58px 1px no-repeat,
    linear-gradient(#14181d, #14181d) 246px 100% / 58px 1px no-repeat,
    linear-gradient(#14181d, #14181d) 370px 100% / 244px 1px no-repeat,
    linear-gradient(#46525f, #46525f) 0 100% / 100% 1px no-repeat,
    linear-gradient(#e6e8eb, #b9bcc1);
  padding: 0 4px 1px 0;
}
.ready {
  width: 53px;
  padding-left: 8px;
  line-height: 20px;
  border-right: 1px solid #7d838c;
  margin-right: auto;
}
.views {
  display: flex;
  align-items: center;
  border-left: 1px solid #7d838c;
  padding-left: 4px;
  height: 21px;
}
.views button {
  width: 19px;
  height: 20px;
}
.percent {
  width: 44px;
  padding-right: 4px;
}
.status input {
  appearance: none;
  width: 100px;
  height: 18px;
  background: linear-gradient(#8d99a8, #8d99a8) center / 100% 1px no-repeat, linear-gradient(#eee, #eee) 50px 5px / 1px 8px no-repeat;
}
.status input::-webkit-slider-thumb {
  appearance: none;
  width: 9px;
  height: 14px;
  border: 1px solid #6f7782;
  border-radius: 1px 1px 5px 5px;
  background: #f5f6f8;
}
```
